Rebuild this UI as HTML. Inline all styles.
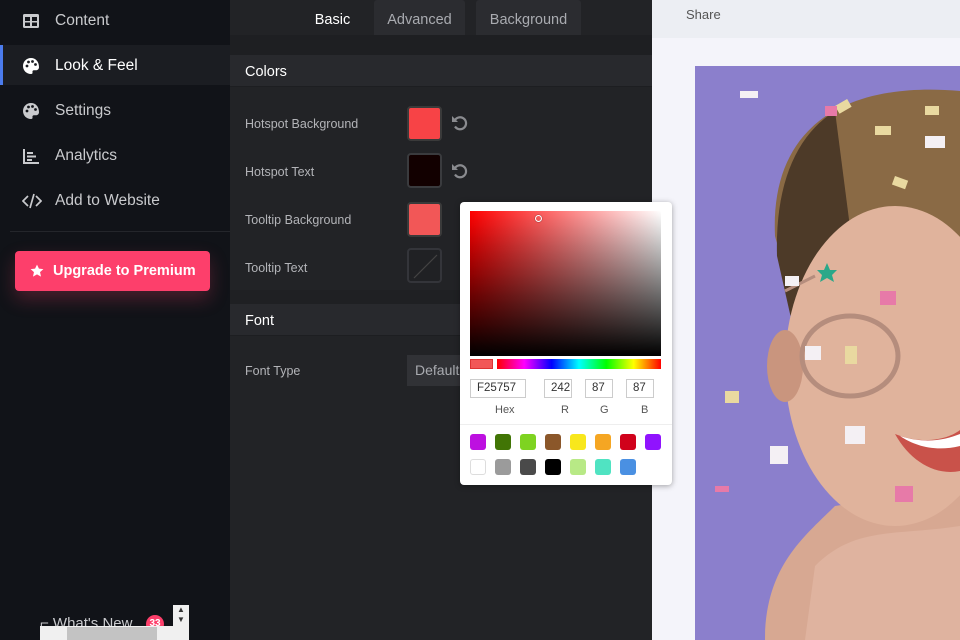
<!DOCTYPE html>
<html><head><meta charset="utf-8"><style>
*{margin:0;padding:0;box-sizing:border-box}
body{width:960px;height:640px;overflow:hidden;position:relative;font-family:"Liberation Sans","DejaVu Sans",sans-serif;background:#111318}
.abs{position:absolute}
#side{left:0;top:0;width:230px;height:640px;background:#111318}
.nav{position:absolute;left:0;width:230px;height:40px;color:#c9cacd;font-size:15.5px;line-height:42px;padding-left:55px}
.nav svg{position:absolute;left:22px;top:12px}
.nav.act{background:#1b1d22;color:#fff;border-left:3px solid #4b7bec;padding-left:52px}
.nav.act svg{left:19px}
#mid{left:230px;top:0;width:422px;height:640px;background:#222326}
.tab{position:absolute;top:0;height:35px;background:#2b2c30;color:#a9abb0;font-size:14.5px;line-height:41px;text-align:center;border-radius:3px 3px 0 0}
.hdr{position:absolute;left:0;width:422px;height:32px;background:#28292d;color:#fff;font-size:14.5px;line-height:34px;padding-left:15px;border-bottom:1px solid #1d1e21}
.lab{position:absolute;left:15px;color:#b3b4b8;font-size:12.5px}
.sw{position:absolute;left:177px;width:35px;height:35px;border-radius:4px;border:2px solid #333}
.undo{position:absolute;left:220px}
#right{left:652px;top:0;width:308px;height:640px;background:#f4f4fa}
#pick{left:460px;top:202px;width:212px;height:283px;background:#fff;border-radius:4px;box-shadow:0 1px 6px rgba(0,0,0,.35)}
.inp{position:absolute;top:177px;height:19px;border:1px solid #ccc;font-size:11.5px;color:#333;line-height:17px;padding-left:6px}
.il{position:absolute;top:202px;font-size:11px;color:#555}
.cs{position:absolute;width:16px;height:16px;border-radius:3px}
</style></head><body>
<div id="side" class="abs">
 <div class="nav" style="top:0">
  <svg width="18" height="18" viewBox="0 0 18 18"><rect x="1" y="2" width="16" height="14" rx="1.5" fill="#c9cacd"/><rect x="3" y="5" width="5" height="4" fill="#111318"/><rect x="10" y="5" width="5" height="4" fill="#111318"/><rect x="3" y="10.5" width="5" height="3.5" fill="#111318"/><rect x="10" y="10.5" width="5" height="3.5" fill="#111318"/></svg>Content</div>
 <div class="nav act" style="top:45px">
  <svg width="18" height="18" viewBox="0 0 18 18"><path d="M9 1C4.5 1 1 4.5 1 9s3.5 8 8 8c1.2 0 1.8-.8 1.5-1.8-.3-1 .3-2 1.5-2h2c1.7 0 3-1.3 3-3C17 4.5 13.5 1 9 1z" fill="#fff"/><circle cx="5" cy="9" r="1.4" fill="#1b1d22"/><circle cx="6.5" cy="5" r="1.4" fill="#1b1d22"/><circle cx="10.5" cy="4.5" r="1.4" fill="#1b1d22"/><circle cx="13.5" cy="7.5" r="1.4" fill="#1b1d22"/></svg>Look &amp; Feel</div>
 <div class="nav" style="top:90px">
  <svg width="18" height="18" viewBox="0 0 18 18"><path d="M9 1C4.5 1 1 4.5 1 9s3.5 8 8 8c1.2 0 1.8-.8 1.5-1.8-.3-1 .3-2 1.5-2h2c1.7 0 3-1.3 3-3C17 4.5 13.5 1 9 1z" fill="#c9cacd"/><circle cx="5" cy="9" r="1.4" fill="#111318"/><circle cx="6.5" cy="5" r="1.4" fill="#111318"/><circle cx="10.5" cy="4.5" r="1.4" fill="#111318"/><circle cx="13.5" cy="7.5" r="1.4" fill="#111318"/></svg>Settings</div>
 <div class="nav" style="top:135px">
  <svg width="18" height="18" viewBox="0 0 18 18"><path d="M2 2v14h15" stroke="#c9cacd" stroke-width="2" fill="none"/><path d="M5 6h6M5 9.5h9M5 13h5" stroke="#c9cacd" stroke-width="2"/></svg>Analytics</div>
 <div class="nav" style="top:180px">
  <svg width="20" height="18" viewBox="0 0 20 18"><path d="M6 4L1 9l5 5M14 4l5 5-5 5M12 2L8 16" stroke="#c9cacd" stroke-width="1.7" fill="none"/></svg>Add to Website</div>
 <div class="abs" style="left:10px;top:231px;width:220px;height:1px;background:#24262b"></div>
 <div class="abs" style="left:15px;top:251px;width:195px;height:40px;background:#fd3f6b;border-radius:4px;color:#fff;font-weight:bold;font-size:14.5px;line-height:41px;padding-left:38px;box-shadow:0 8px 18px rgba(253,63,107,.25)">
  <svg class="abs" style="left:15px;top:13px" width="14" height="14" viewBox="0 0 24 24"><path d="M12 1l3.3 7 7.7.8-5.8 5.2 1.7 7.6L12 17.8 5.1 21.6l1.7-7.6L1 8.8 8.7 8z" fill="#fff"/></svg>Upgrade to Premium</div>
 <div class="abs" style="left:40px;top:615px;color:#c9cacd;font-size:15px">⌐ What's New</div>
 <div class="abs" style="left:146px;top:615px;width:18px;height:18px;border-radius:9px;background:#fd3f6b;color:#fff;font-size:10px;font-weight:bold;text-align:center;line-height:18px">33</div>
 <div class="abs" style="left:40px;top:626px;width:149px;height:14px;background:#f0f0f0"></div>
 <div class="abs" style="left:67px;top:627px;width:90px;height:13px;background:#c3c3c3"></div>
 <div class="abs" style="left:173px;top:605px;width:16px;height:22px;background:#f0f0f0;font-size:8px;color:#333;text-align:center;line-height:10px">▲<br>▼</div>
</div>
<div id="mid" class="abs">
 <div class="abs" style="left:0;top:35px;width:422px;height:20px;background:#1e1f22"></div>
 <div class="tab" style="left:71px;width:63px;background:#222326;color:#fff">Basic</div>
 <div class="tab" style="left:144px;width:91px">Advanced</div>
 <div class="tab" style="left:246px;width:105px">Background</div>
 <div class="hdr" style="top:55px">Colors</div>
 <div class="lab" style="top:117px">Hotspot Background</div>
 <div class="sw" style="top:106px;background:#f74346;border-color:#3a3a3a"></div>
 <div class="lab" style="top:165px">Hotspot Text</div>
 <div class="sw" style="top:153px;background:#120000;border-color:#3a3b3e"></div>
 <div class="lab" style="top:213px">Tooltip Background</div>
 <div class="sw" style="top:202px;background:#f25757;border-color:#3a3a3a"></div>
 <div class="lab" style="top:261px">Tooltip Text</div>
 <div class="sw" style="top:248px;background:#202124;border-color:#34353a"><svg width="31" height="31" class="abs"><line x1="5" y1="28" x2="28" y2="5" stroke="#444" stroke-width="1.2"/></svg></div>
 <svg class="undo" style="top:113px" width="20" height="20" viewBox="0 0 20 20"><path d="M4.5 8A6 6 0 1 1 5 13.5" stroke="#8a8b8f" stroke-width="2.2" fill="none"/><path d="M2 3v6h6z" fill="#8a8b8f"/></svg>
 <svg class="undo" style="top:161px" width="20" height="20" viewBox="0 0 20 20"><path d="M4.5 8A6 6 0 1 1 5 13.5" stroke="#8a8b8f" stroke-width="2.2" fill="none"/><path d="M2 3v6h6z" fill="#8a8b8f"/></svg>
 <div class="abs" style="left:0;top:290px;width:422px;height:14px;background:#1f2023"></div>
 <div class="hdr" style="top:304px">Font</div>
 <div class="lab" style="top:364px">Font Type</div>
 <div class="abs" style="left:177px;top:355px;width:60px;height:31px;background:#313236;color:#a9abb0;font-size:14px;line-height:31px;padding-left:8px">Default</div>
</div>
<div id="right" class="abs">
 <div class="abs" style="left:0;top:0;width:308px;height:38px;background:#eceef3;color:#555;font-size:13px;line-height:30px;padding-left:34px">Share</div>
 <svg class="abs" style="left:43px;top:66px" width="265" height="574" viewBox="0 0 265 574">
  <rect width="265" height="574" fill="#8b7fcc"/>
  <path d="M70 574 C70 500 110 470 140 440 L265 420 L265 574Z" fill="#d7a892"/>
  <path d="M80 170 C75 60 150 15 265 25 L265 200 L130 200 C110 210 90 210 80 170Z" fill="#8a6a45"/>
  <path d="M82 190 C80 120 100 70 140 45 L160 200 L100 270Z" fill="#4d3a28"/>
  <ellipse cx="200" cy="300" rx="110" ry="160" fill="#e0b39c"/>
  <ellipse cx="90" cy="300" rx="18" ry="36" fill="#c9957e"/>
  <path d="M120 500 C160 460 200 470 265 460 L265 574 L110 574Z" fill="#dfb39f"/>
  <path d="M200 368 C230 380 255 372 265 364 L265 405 C240 410 215 395 200 368Z" fill="#c9524a"/>
  <path d="M205 370 C230 378 250 374 265 368 L265 380 C240 386 220 380 205 370Z" fill="#fff"/>
  <ellipse cx="155" cy="290" rx="48" ry="40" fill="none" stroke="#b58d7d" stroke-width="5"/>
  <path d="M90 225 L120 210" stroke="#b58d7d" stroke-width="3"/>
  <g fill="#e9d9a0"><rect x="140" y="40" width="14" height="9" transform="rotate(-30 140 40)"/><rect x="180" y="60" width="16" height="9"/><rect x="230" y="40" width="14" height="9"/><rect x="200" y="110" width="14" height="9" transform="rotate(20 200 110)"/><rect x="30" y="325" width="14" height="12"/><rect x="150" y="280" width="12" height="18"/></g>
  <g fill="#f4f0f4"><rect x="45" y="25" width="18" height="7"/><rect x="90" y="210" width="14" height="10"/><rect x="110" y="280" width="16" height="14"/><rect x="150" y="360" width="20" height="18"/><rect x="75" y="380" width="18" height="18"/><rect x="230" y="70" width="20" height="12"/></g>
  <g fill="#e77aa8"><rect x="185" y="225" width="16" height="14"/><rect x="130" y="40" width="12" height="10"/><rect x="20" y="420" width="14" height="6"/><rect x="200" y="420" width="18" height="16"/></g>
  <path d="M132 197 l3 7 7 0 -5 5 2 7 -7 -4 -7 4 2 -7 -5 -5 7 0z" fill="#2aa889"/>
 </svg>
</div>
<div id="pick" class="abs">
 <div class="abs" style="left:10px;top:9px;width:191px;height:145px;background:linear-gradient(to top,#000,rgba(0,0,0,0)),linear-gradient(to right,#f00,#fff)"></div>
 <div class="abs" style="left:75px;top:13px;width:7px;height:7px;border:1.5px solid #fff;border-radius:50%;box-shadow:0 0 1px #000"></div>
 <div class="abs" style="left:10px;top:157px;width:23px;height:10px;background:#f25757;border:1px solid #d33"></div>
 <div class="abs" style="left:37px;top:157px;width:164px;height:10px;background:linear-gradient(to right,#f00,#f0f,#00f,#0ff,#0f0,#ff0,#f00)"></div>
 <div class="inp" style="left:10px;width:56px">F25757</div>
 <div class="inp" style="left:84px;width:28px">242</div>
 <div class="inp" style="left:125px;width:28px">87</div>
 <div class="inp" style="left:166px;width:28px">87</div>
 <div class="il" style="left:35px">Hex</div><div class="il" style="left:101px">R</div><div class="il" style="left:140px">G</div><div class="il" style="left:181px">B</div>
 <div class="abs" style="left:0;top:222px;width:212px;height:1px;background:#eee"></div>
 <div class="cs" style="left:10px;top:232px;background:#bd10e0"></div>
 <div class="cs" style="left:35px;top:232px;background:#417505"></div>
 <div class="cs" style="left:60px;top:232px;background:#7ed321"></div>
 <div class="cs" style="left:85px;top:232px;background:#8b572a"></div>
 <div class="cs" style="left:110px;top:232px;background:#f8e71c"></div>
 <div class="cs" style="left:135px;top:232px;background:#f5a623"></div>
 <div class="cs" style="left:160px;top:232px;background:#d0021b"></div>
 <div class="cs" style="left:185px;top:232px;background:#9013fe"></div>
 <div class="cs" style="left:10px;top:257px;background:#fff;border:1px solid #ddd"></div>
 <div class="cs" style="left:35px;top:257px;background:#9b9b9b"></div>
 <div class="cs" style="left:60px;top:257px;background:#4a4a4a"></div>
 <div class="cs" style="left:85px;top:257px;background:#000"></div>
 <div class="cs" style="left:110px;top:257px;background:#b8e986"></div>
 <div class="cs" style="left:135px;top:257px;background:#50e3c2"></div>
 <div class="cs" style="left:160px;top:257px;background:#4a90e2"></div>
</div>
</body></html>
